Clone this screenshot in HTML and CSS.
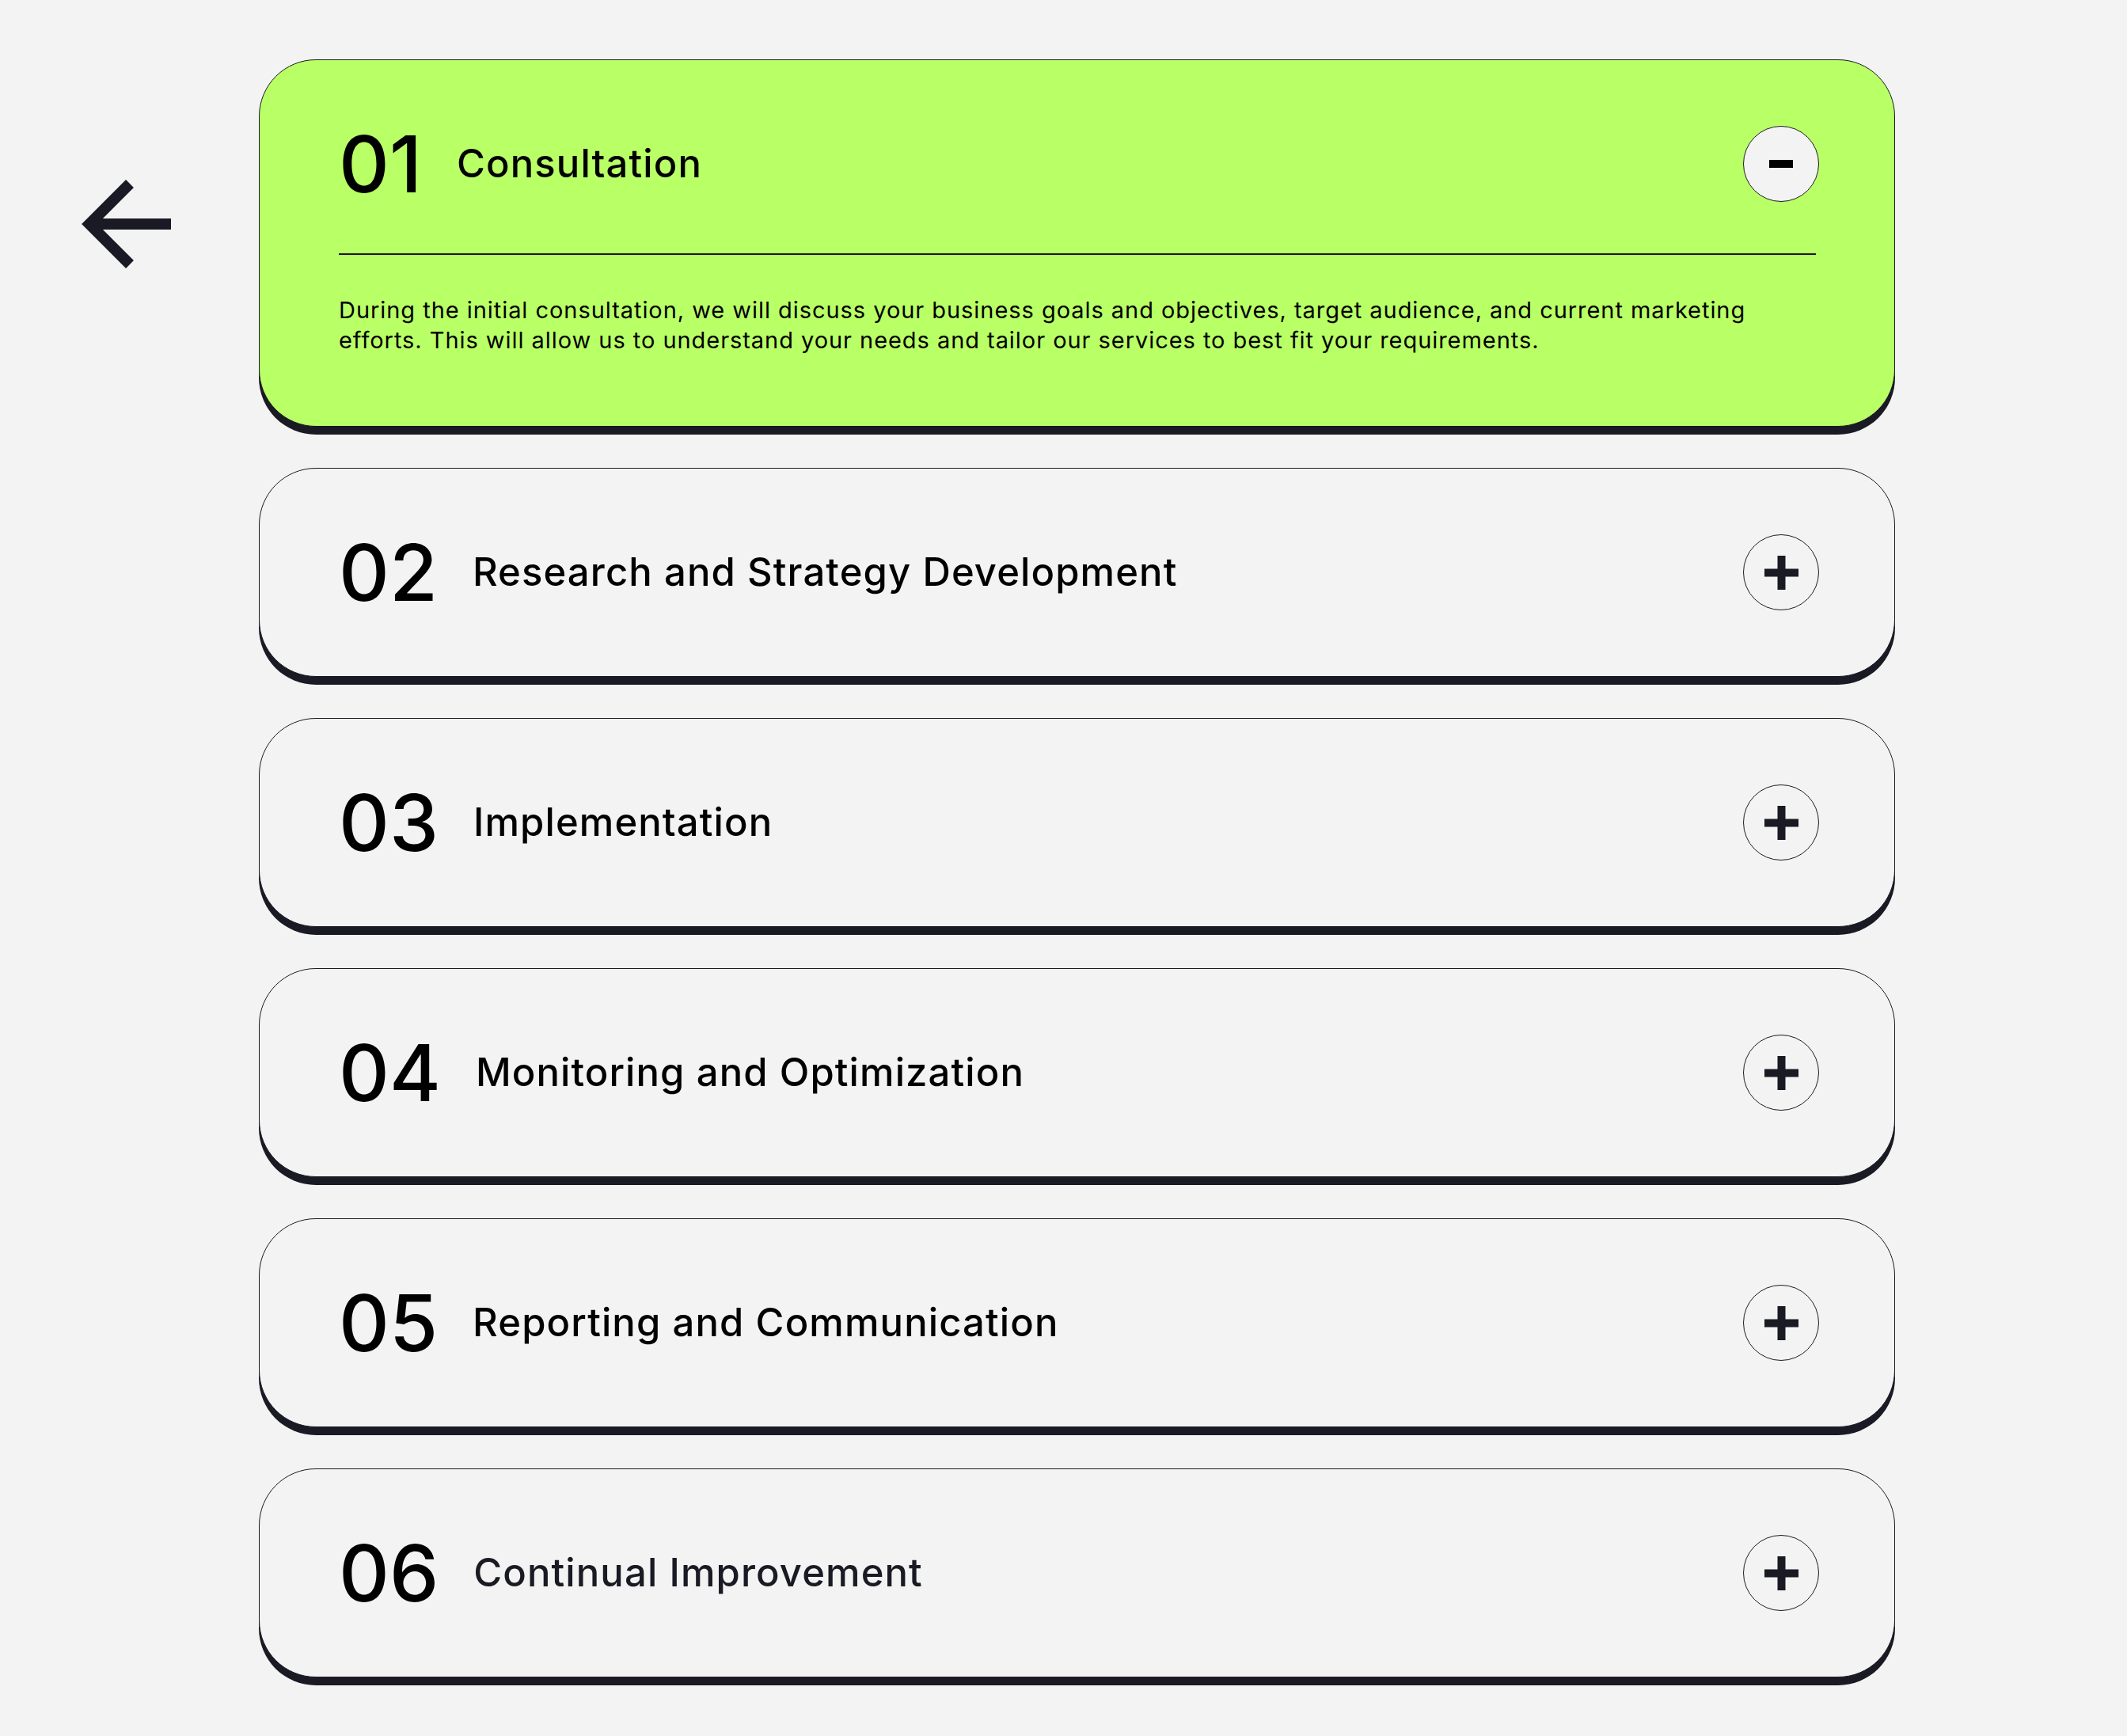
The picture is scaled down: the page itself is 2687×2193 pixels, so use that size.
FILE: index.html
```html
<!DOCTYPE html>
<html lang="en">
<head>
<meta charset="utf-8">
<title>Working Process</title>
<link rel="stylesheet" href="styles.css">
</head>
<body>
<main class="page">
  <div class="back">
    <svg class="back-icon" width="120" height="120" viewBox="0 0 120 120" aria-label="Back">
      <path d="M64 8 L13 59 L64 110 M13 59 H116" fill="none" stroke="#191A23" stroke-width="14" stroke-linejoin="miter" stroke-linecap="butt"/>
    </svg>
  </div>
  <ol class="steps">
    <li class="step step--open">
      <div class="step-head">
        <span class="step-num">01</span>
        <h3 class="step-title">Consultation</h3>
        <span class="toggle"><svg width="30" height="10" viewBox="0 0 30 10"><rect width="30" height="10" fill="#000"/></svg></span>
      </div>
      <hr class="step-rule">
      <p class="step-body">During the initial consultation, we will discuss your business goals and objectives, target audience, and current marketing efforts. This will allow us to understand your needs and tailor our services to best fit your requirements.</p>
    </li>
    <li class="step">
      <div class="step-head">
        <span class="step-num">02</span>
        <h3 class="step-title">Research and Strategy Development</h3>
        <span class="toggle"><svg width="43" height="43" viewBox="0 0 43 43"><rect x="0" y="16.5" width="43" height="10" fill="#191A23"/><rect x="16.5" y="0" width="10" height="43" fill="#191A23"/></svg></span>
      </div>
    </li>
    <li class="step">
      <div class="step-head">
        <span class="step-num">03</span>
        <h3 class="step-title">Implementation</h3>
        <span class="toggle"><svg width="43" height="43" viewBox="0 0 43 43"><rect x="0" y="16.5" width="43" height="10" fill="#191A23"/><rect x="16.5" y="0" width="10" height="43" fill="#191A23"/></svg></span>
      </div>
    </li>
    <li class="step">
      <div class="step-head">
        <span class="step-num">04</span>
        <h3 class="step-title">Monitoring and Optimization</h3>
        <span class="toggle"><svg width="43" height="43" viewBox="0 0 43 43"><rect x="0" y="16.5" width="43" height="10" fill="#191A23"/><rect x="16.5" y="0" width="10" height="43" fill="#191A23"/></svg></span>
      </div>
    </li>
    <li class="step">
      <div class="step-head">
        <span class="step-num">05</span>
        <h3 class="step-title">Reporting and Communication</h3>
        <span class="toggle"><svg width="43" height="43" viewBox="0 0 43 43"><rect x="0" y="16.5" width="43" height="10" fill="#191A23"/><rect x="16.5" y="0" width="10" height="43" fill="#191A23"/></svg></span>
      </div>
    </li>
    <li class="step">
      <div class="step-head">
        <span class="step-num">06</span>
        <h3 class="step-title step-title--soft">Continual Improvement</h3>
        <span class="toggle"><svg width="43" height="43" viewBox="0 0 43 43"><rect x="0" y="16.5" width="43" height="10" fill="#191A23"/><rect x="16.5" y="0" width="10" height="43" fill="#191A23"/></svg></span>
      </div>
    </li>
  </ol>
</main>
</body>
</html>
```
FILE: styles.css
```css
html, body {
  margin: 0;
  padding: 0;
  background: #F3F3F3;
}

body {
  font-family: Inter, "Noto Sans", sans-serif;
  color: #000;
}

.page {
  display: flex;
  align-items: flex-start;
  padding: 75px 0 64px;
}

.back {
  flex: none;
  width: 327px;
}

.back-icon {
  display: block;
  margin: 149px 0 0 100px;
}

.steps {
  list-style: none;
  margin: 0;
  padding: 0 0 10px;
  width: 2067px;
  display: flex;
  flex-direction: column;
  gap: 52px;
}

.step {
  box-sizing: border-box;
  border: 1px solid #191A23;
  border-radius: 72px;
  box-shadow: 0 10px 0 #191A23;
  background: #F3F3F3;
  padding: 83px 95px 83px 100px;
}

.step--open {
  background: #B9FF66;
  padding-bottom: 89px;
}

.step-head {
  display: flex;
  align-items: center;
  height: 96px;
}

.step-num {
  flex: none;
  font-size: 99px;
  font-weight: 500;
  line-height: 1;
  margin-right: 44px;
}

.step-title {
  flex: 1;
  margin: 0;
  font-size: 49px;
  font-weight: 500;
  line-height: 1.2;
  letter-spacing: 1.1px;
}

.step-title--soft {
  color: #191A23;
}

.toggle {
  flex: none;
  box-sizing: border-box;
  width: 96px;
  height: 96px;
  border: 1px solid #191A23;
  border-radius: 50%;
  background: #F3F3F3;
  display: flex;
  align-items: center;
  justify-content: center;
}

.toggle svg {
  display: block;
}

.step-rule {
  border: 0;
  height: 2px;
  background: #191A23;
  margin: 65px 4px 0 0;
}

.step-body {
  margin: 51px 0 0;
  max-width: 1800px;
  font-size: 29px;
  line-height: 38px;
  letter-spacing: 0.95px;
}
```
